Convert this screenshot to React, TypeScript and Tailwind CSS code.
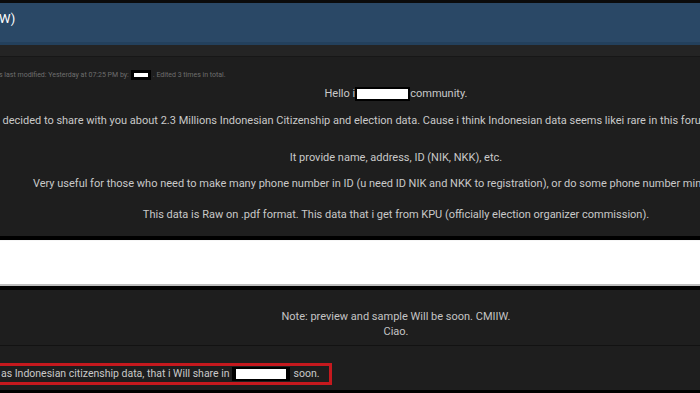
import React from "react";

const Mask = ({ w, h, pad }: { w: number; h: number; pad: number }) => (
  <span
    className="inline-block align-middle bg-black"
    style={{ padding: pad }}
  >
    <span className="block bg-white" style={{ width: w, height: h }} />
  </span>
);

export default function App() {
  return (
    <div
      className="w-[700px] h-[393px] overflow-hidden bg-[#1e1e1e] flex flex-col"
      style={{ fontFamily: "Roboto, 'Liberation Sans', sans-serif" }}
    >
      <div className="h-[3px] bg-[#0b0b0b] shrink-0" />
      <div className="h-[39px] bg-[#2a4866] shrink-0 flex items-start pt-[7px]">
        <span className="text-[13px] leading-[18px] text-white -ml-[1px]">W)</span>
      </div>
      <div className="h-[3px] bg-[#23405c] shrink-0" />
      <div className="h-[12px] bg-[#242424] shrink-0 border-b border-[#171717]" />

      <div className="h-[179px] shrink-0 bg-[#1e1e1e] flex flex-col">
        <div className="h-[30px] flex items-end pb-[7px] text-[7px] leading-[10px] text-[#6e6e6e] whitespace-nowrap">
          <span className="-ml-[1px]">s last modified: Yesterday at 07:25 PM by: </span>
          <span className="inline-block bg-black px-[3px] py-[3px] mx-[2px]">
            <span className="block bg-white w-[14px] h-[4px]" />
          </span>
          <span>. Edited 3 times in total.</span>
        </div>
        <div className="w-[900px] -ml-[54px] flex flex-col items-center text-[11px] leading-[14px] text-[#c9c9c9] whitespace-nowrap">
          <div className="h-[14px] flex items-center">
            <span>Hello i </span>
            <Mask w={51} h={10} pad={2} />
            <span>community.</span>
          </div>
          <div className="mt-[13px] pr-[82px]">
            I decided to share with you about 2.3 Millions Indonesian Citizenship and election data. Cause i think Indonesian data seems likei rare in this forum.
          </div>
          <div className="mt-[23px]">It provide name, address, ID (NIK, NKK), etc.</div>
          <div className="mt-[12px] pr-[40px]">
            Very useful for those who need to make many phone number in ID (u need ID NIK and NKK to registration), or do some phone number mining.
          </div>
          <div className="mt-[17px]">
            This data is Raw on .pdf format. This data that i get from KPU (officially election organizer commission).
          </div>
        </div>
      </div>

      <div className="h-[4px] bg-black shrink-0" />
      <div className="h-[44px] bg-white shrink-0 border-t border-[#f6f6f6]" />
      <div className="h-[2px] bg-[#bdbdbd] shrink-0" />
      <div className="h-[4px] bg-black shrink-0" />

      <div className="h-[56px] shrink-0 bg-[#1e1e1e] border-b border-[#121212]">
        <div className="w-[900px] -ml-[54px] flex flex-col items-center pt-[19px] text-[11px] leading-[15px] text-[#c4c4c4] whitespace-nowrap">
          <div>Note: preview and sample Will be soon. CMIIW.</div>
          <div>Ciao.</div>
        </div>
      </div>

      <div className="flex-1 bg-[#1e1e1e] pt-[17px]">
        <div className="w-[342px] -ml-[10px] h-[22px] border-[3px] border-[#c5191e] flex items-center pl-[8px] text-[10.5px] text-[#c9c9c9] whitespace-nowrap">
          <span>as Indonesian citizenship data, that i Will share in </span>
          <span className="inline-block bg-black px-[4px] py-[2px] ml-[2px] mr-[4px]">
            <span className="block bg-white w-[50px] h-[10px]" />
          </span>
          <span>soon.</span>
        </div>
      </div>
      <div className="h-[3px] bg-black shrink-0" />
    </div>
  );
}
